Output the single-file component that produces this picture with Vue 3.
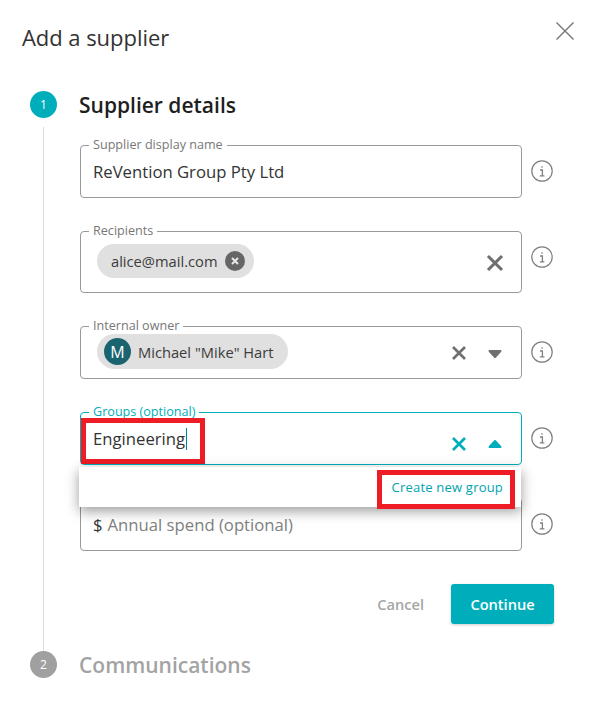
<script setup>
const stepOneFields = 5
</script>

<template>
  <div class="dialog" :data-fields="stepOneFields">
    <header class="header">
      <h1 class="dialog-title">Add a supplier</h1>
      <button class="close" aria-label="Close">
        <svg width="20" height="20" viewBox="0 0 20 20"><path d="M1.5 1.5 18.5 18.5M18.5 1.5 1.5 18.5" stroke="#757575" stroke-width="1.4" fill="none"/></svg>
      </button>
    </header>

    <section class="step-head">
      <span class="bubble active">1</span>
      <h2 class="step-title">Supplier details</h2>
    </section>

    <div class="step-body">
      <div class="row">
        <div class="field">
          <span class="legend">Supplier display name</span>
          <span class="value">ReVention Group Pty Ltd</span>
        </div>
        <svg class="info" viewBox="0 0 22 22"><circle cx="11" cy="11" r="10.2" fill="none" stroke="#808080" stroke-width="1.2"/><path d="M11 6.2v1.6M9 10h2.4v5.6M8.8 15.8h4.6" fill="none" stroke="#808080" stroke-width="1.3"/></svg>
      </div>

      <div class="row">
        <div class="field tall">
          <span class="legend">Recipients</span>
          <span class="chip chip-mail">
            <span>alice@mail.com</span>
            <span class="chip-x">
              <svg width="8" height="8" viewBox="0 0 8 8"><path d="M1 1 7 7M7 1 1 7" stroke="#e8e8e8" stroke-width="2"/></svg>
            </span>
          </span>
          <div class="actions">
            <span class="act act-down"><svg width="18" height="18" viewBox="0 0 18 18"><path d="M2 2 16 16M16 2 2 16" stroke="#707070" stroke-width="3.1"/></svg></span>
          </div>
        </div>
        <svg class="info" viewBox="0 0 22 22"><circle cx="11" cy="11" r="10.2" fill="none" stroke="#808080" stroke-width="1.2"/><path d="M11 6.2v1.6M9 10h2.4v5.6M8.8 15.8h4.6" fill="none" stroke="#808080" stroke-width="1.3"/></svg>
      </div>

      <div class="row">
        <div class="field">
          <span class="legend">Internal owner</span>
          <span class="chip chip-person">
            <span class="avatar">M</span>
            <span>Michael "Mike" Hart</span>
          </span>
          <div class="actions">
            <span class="act"><svg width="16" height="16" viewBox="0 0 16 16"><path d="M2 2 14 14M14 2 2 14" stroke="#707070" stroke-width="2.7"/></svg></span>
            <span class="act caret-down"><svg width="16" height="10" viewBox="0 0 16 10"><path d="M2.5 2h11L8 8Z" fill="#707070" stroke="#707070" stroke-width="2" stroke-linejoin="round"/></svg></span>
          </div>
        </div>
        <svg class="info" viewBox="0 0 22 22"><circle cx="11" cy="11" r="10.2" fill="none" stroke="#808080" stroke-width="1.2"/><path d="M11 6.2v1.6M9 10h2.4v5.6M8.8 15.8h4.6" fill="none" stroke="#808080" stroke-width="1.3"/></svg>
      </div>

      <div class="row">
        <div class="field focused">
          <span class="legend">Groups (optional)</span>
          <span class="value">Engineering<i class="cursor"></i></span>
          <div class="actions act-low">
            <span class="act"><svg width="16" height="16" viewBox="0 0 16 16"><path d="M2 2 14 14M14 2 2 14" stroke="#00aebb" stroke-width="2.7"/></svg></span>
            <span class="act"><svg width="16" height="10" viewBox="0 0 16 10"><path d="M2.5 8h11L8 2Z" fill="#00aebb" stroke="#00aebb" stroke-width="2" stroke-linejoin="round"/></svg></span>
          </div>
          <span class="mark mark-input"></span>
          <div class="dropdown">
            <a class="create">Create new group</a>
            <span class="mark mark-create"></span>
          </div>
        </div>
        <svg class="info" viewBox="0 0 22 22"><circle cx="11" cy="11" r="10.2" fill="none" stroke="#808080" stroke-width="1.2"/><path d="M11 6.2v1.6M9 10h2.4v5.6M8.8 15.8h4.6" fill="none" stroke="#808080" stroke-width="1.3"/></svg>
      </div>

      <div class="row">
        <div class="field">
          <span class="value"><span class="currency">$</span> <span class="placeholder">Annual spend (optional)</span></span>
        </div>
        <svg class="info" viewBox="0 0 22 22"><circle cx="11" cy="11" r="10.2" fill="none" stroke="#808080" stroke-width="1.2"/><path d="M11 6.2v1.6M9 10h2.4v5.6M8.8 15.8h4.6" fill="none" stroke="#808080" stroke-width="1.3"/></svg>
      </div>

      <div class="buttons">
        <button class="cancel">Cancel</button>
        <button class="continue">Continue</button>
      </div>
    </div>

    <section class="step-head">
      <span class="bubble">2</span>
      <h2 class="step-title muted">Communications</h2>
    </section>
  </div>
</template>

<style scoped>
.dialog {
  width: 605px;
  height: 726px;
  overflow: hidden;
  background: #fff;
  font-family: "Open Sans", "Noto Sans", sans-serif;
  color: #333;
}
.header {
  height: 91px;
  display: flex;
  justify-content: space-between;
  align-items: flex-start;
  padding: 0 30px 0 22px;
  box-sizing: border-box;
}
.dialog-title {
  margin: 22px 0 0;
  font-size: 22px;
  line-height: 30px;
  font-weight: 500;
  letter-spacing: -0.05px;
  color: #333;
}
.close {
  margin: 21px 0 0;
  padding: 0;
  border: 0;
  background: none;
  width: 20px;
  height: 20px;
}
.step-head {
  display: flex;
  align-items: center;
  gap: 22px;
  height: 27px;
  padding-left: 30px;
}
.bubble {
  width: 27px;
  height: 27px;
  border-radius: 50%;
  background: #a0a0a0;
  color: #fff;
  font-size: 12px;
  display: flex;
  align-items: center;
  justify-content: center;
}
.bubble.active { background: #00aebb; }
.step-title {
  margin: 0;
  font-size: 21px;
  font-weight: 600;
  color: #1e1e1e;
}
.step-title.muted { color: #a3a3a3; }
.step-body {
  margin: 9px 0 0 43px;
  padding: 18px 0 27px 36px;
  border-left: 1px solid #dcdcdc;
  display: flex;
  flex-direction: column;
  gap: 33px;
  height: 524px;
  box-sizing: border-box;
}
.row {
  display: flex;
  align-items: flex-start;
  gap: 9px;
}
.info {
  width: 22px;
  height: 22px;
  margin-top: 15px;
  flex: none;
}
.field {
  position: relative;
  width: 442px;
  height: 53px;
  box-sizing: border-box;
  border: 1px solid #999;
  border-radius: 4px;
  padding: 0 8px 0 12px;
  display: flex;
  align-items: center;
}
.field.tall { height: 62px; padding-left: 16px; }
.field.focused { border-color: #00aebb; }
.legend {
  position: absolute;
  left: 8px;
  top: -9px;
  padding: 0 4px;
  background: #fff;
  font-size: 12.6px;
  line-height: 16px;
  color: #777;
}
.focused .legend { color: #00aebb; }
.value {
  font-size: 16.7px;
  color: #333;
  display: flex;
  gap: 5px;
  white-space: pre;
  align-items: center;
}
.cursor {
  width: 1px;
  height: 22px;
  background: #00818c;
  margin-left: -4px;
}
.currency { color: #333; }
.placeholder { color: #808080; }
.chip {
  display: inline-flex;
  align-items: center;
  background: #e0e0e0;
  border-radius: 18px;
  color: #3c3c3c;
  font-size: 14.7px;
  white-space: nowrap;
}
.chip-mail {
  height: 34px;
  padding: 0 9px 0 14px;
  gap: 7px;
  margin-top: -3px;
}
.chip-x {
  width: 20px;
  height: 20px;
  border-radius: 50%;
  background: #666;
  display: flex;
  align-items: center;
  justify-content: center;
}
.chip-person {
  height: 35px;
  padding: 0 14px 0 7px;
  gap: 7px;
  margin: -2px 0 0 4px;
}
.avatar {
  width: 27px;
  height: 27px;
  border-radius: 50%;
  background: #1a6470;
  color: #fff;
  font-size: 16px;
  display: flex;
  align-items: center;
  justify-content: center;
}
.actions {
  margin-left: auto;
  display: flex;
  align-items: center;
}
.act-low { margin-top: 10px; }
.act {
  width: 36px;
  display: flex;
  justify-content: center;
}
.act-down { margin-top: 2px; }
.caret-down { margin-top: 2px; }
.dropdown {
  position: absolute;
  left: -2px;
  right: 0;
  top: 54px;
  height: 40px;
  background: #fff;
  box-shadow: 0 4px 12px rgba(0, 0, 0, 0.4);
  display: flex;
  align-items: center;
  justify-content: flex-end;
  padding-right: 18px;
  z-index: 2;
}
.create {
  color: #00a3b0;
  font-size: 13px;
  letter-spacing: 0.2px;
}
.mark {
  position: absolute;
  border: 5px solid #ee1c25;
  box-sizing: border-box;
}
.mark-input {
  left: 0;
  top: 5px;
  width: 124px;
  height: 46px;
}
.mark-create {
  right: 6px;
  top: 3px;
  width: 138px;
  height: 39px;
}
.buttons {
  display: flex;
  justify-content: flex-end;
  align-items: center;
  width: 474px;
  gap: 27px;
}
.buttons button {
  font-family: inherit;
  font-size: 14.6px;
  font-weight: 600;
  border: 0;
  padding: 0;
}
.cancel {
  background: none;
  color: #a6a6a6;
}
.continue {
  width: 103px;
  height: 40px;
  background: #00aebb;
  color: #fff;
  border-radius: 3px;
  box-shadow: 0 1px 3px rgba(0, 0, 0, 0.2);
}
</style>
